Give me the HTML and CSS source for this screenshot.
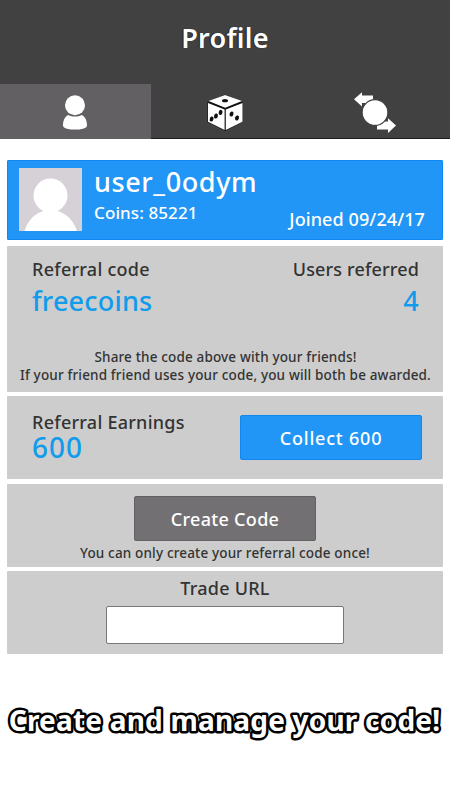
FILE: index.html
```html
<!DOCTYPE html>
<html lang="en">
<head>
    <meta charset="UTF-8">
    <title>Profile</title>
    <link rel="stylesheet" href="styles.css">
</head>
<body>
    <header class="header">
        <h1 class="title">Profile</h1>
    </header>

    <!-- Tabs -->
    <nav class="tabs">
        <a class="tab active">
            <svg width="50" height="54" viewBox="50 84 50 54">
                <path d="M68.3 115 C64.5 117 63 121 63 125.500 C63 128.500 69 129.600 75 129.600 S87 128.500 87 125.500 C87 121 85.500 117 81.700 115 C78 117 72 117 68.300 115Z" fill="#fff"/>
                <circle cx="75" cy="105.200" r="10" fill="#fff"/>
            </svg>
        </a>
        <a class="tab">
            <svg width="50" height="54" viewBox="200 84 50 54">
                <path d="M207.500 102 L225 94.500 L242.700 102 V122 L225.200 131 L207.500 122Z" fill="#111"/>
                <path d="M208.500 101 L225 95 L242 101 L225.200 107.800Z M208 103 L224.600 109.500 V130 L208 121.700Z M242.500 103 L225.800 109.500 V130 L242.500 121.700Z" fill="#fff"/>
                <ellipse cx="225" cy="100.700" rx="3" ry="1.600" fill="#111"/>
                <g fill="#111">
                    <ellipse cx="211.600" cy="119" rx="1.900" ry="2.600" transform="rotate(15 211.600 119)"/>
                    <ellipse cx="216" cy="116" rx="1.900" ry="2.600" transform="rotate(15 216 116)"/>
                    <ellipse cx="220.600" cy="112.400" rx="1.900" ry="2.600" transform="rotate(15 220.600 112.400)"/>
                    <ellipse cx="231.500" cy="114" rx="1.900" ry="2.600" transform="rotate(20 231.500 114)"/>
                    <ellipse cx="237" cy="118" rx="1.900" ry="2.600" transform="rotate(20 237 118)"/>
                </g>
            </svg>
        </a>
        <a class="tab">
            <svg width="50" height="54" viewBox="350 84 50 54">
                <path d="M354 99.300 L362 92.200 V95.500 H373 V103 H362 V106.500Z" fill="#fff"/>
                <path d="M396 125.500 L388 118.200 V121.500 H377 V129.500 H388 V133Z" fill="#fff"/>
                <circle cx="375" cy="112.500" r="12.900" fill="#fff" stroke="#414141" stroke-width="1.200"/>
            </svg>
        </a>
    </nav>

    <main class="content">
        <!-- User -->
        <section class="card user">
            <svg class="avatar" width="63" height="63" viewBox="0 0 63 63">
                <rect width="63" height="63" fill="#d5d1d6"/>
                <path d="M5.500 63 C10 48 21 42 31.500 42 S53 48 58 63Z" fill="#fff"/>
                <circle cx="31.500" cy="27.500" r="17" fill="#fff"/>
            </svg>
            <div class="user-info">
                <div class="name">user_0odym</div>
                <div class="coins">Coins: 85221</div>
            </div>
            <div class="joined">Joined 09/24/17</div>
        </section>

        <!-- Referral code -->
        <section class="card referral">
            <div class="row">
                <div>
                    <div class="label">Referral code</div>
                    <div class="value">freecoins</div>
                </div>
                <div class="right">
                    <div class="label label-users">Users referred</div>
                    <div class="value">4</div>
                </div>
            </div>
            <p class="note">Share the code above with your friends!</p>
            <p class="note">If your friend friend uses your code, you will both be awarded.</p>
        </section>

        <!-- Earnings -->
        <section class="card earnings">
            <div>
                <div class="label">Referral Earnings</div>
                <div class="value value-earnings">600</div>
            </div>
            <button class="button collect">Collect 600</button>
        </section>

        <section class="card create">
            <button class="button create-button">Create Code</button>
            <p class="note">You can only create your referral code once!</p>
        </section>

        <section class="card trade">
            <label class="label label-trade" for="trade-url">Trade URL</label>
            <input type="text" id="trade-url" class="trade-input">
        </section>
    </main>

    <svg class="caption" width="450" height="50" viewBox="0 0 450 50">
        <text x="224.500" y="35" text-anchor="middle">Create and manage your code!</text>
    </svg>
</body>
</html>
```

FILE: styles.css
```css
* {
    box-sizing: border-box;
}
body {
    margin: 0;
    background: #fff;
    color: #333;
    font-family: "Noto Sans", "Open Sans", sans-serif;
    font-weight: 500;
    white-space: nowrap;
    overflow: hidden;
}
p, h1 {
    margin: 0;
}
.header {
    height: 84px;
    padding-top: 18px;
    background: #414141;
    color: #fff;
    text-align: center;
}
.title {
    font-size: 27px;
    line-height: 40px;
    font-weight: 600;
    letter-spacing: 0.3px;
    text-shadow: -1px 0 1px #222;
}
.tabs {
    display: flex;
    height: 55px;
    background: #414141;
    border-bottom: 1px solid #1c1c1c;
}
.tab {
    flex: 1;
    height: 54px;
    text-align: center;
}
.tab svg {
    display: block;
    margin: 0 auto;
}
.tab.active {
    height: 55px;
    background: #636063;
    box-shadow: 1px 0 0 #636063;
}
.content {
    display: flex;
    flex-direction: column;
    padding: 21px 7px 0;
}
.card {
    background: #cdcdcd;
    border-radius: 1px;
}
.user {
    display: flex;
    height: 80px;
    margin-bottom: 6px;
    padding: 7px 17px 0 11px;
    background: #2196f6;
    border: 1px solid #0f88ef;
    color: #fff;
}
.avatar {
    flex: none;
}
.user-info {
    flex: 1;
    padding-left: 12px;
}
.name {
    margin-top: -5px;
    font-size: 27px;
    line-height: 38px;
    letter-spacing: 0.6px;
}
.coins {
    font-size: 17px;
    line-height: 24px;
    letter-spacing: 0.1px;
}
.joined {
    padding-top: 39px;
    font-size: 18px;
    line-height: 24px;
    letter-spacing: 0.1px;
}
.referral {
    height: 146px;
    margin-bottom: 4px;
    padding: 11px 24px 0 25px;
}
.row {
    display: flex;
    justify-content: space-between;
    height: 91px;
}
.right {
    text-align: right;
}
.label {
    font-size: 18px;
    line-height: 24px;
    letter-spacing: 0.25px;
}
.label-users {
    letter-spacing: 0.15px;
}
.value {
    color: #119ceb;
    font-size: 27px;
    line-height: 39px;
    letter-spacing: 0.2px;
}
.note {
    font-size: 13.5px;
    line-height: 18px;
    letter-spacing: 0.16px;
    text-align: center;
}
.referral .note {
    margin: 0 -20px;
}
.earnings {
    display: flex;
    justify-content: space-between;
    height: 83px;
    margin-bottom: 5px;
    padding: 14px 21px 0 25px;
}
.value-earnings {
    font-size: 28px;
    line-height: 27px;
    letter-spacing: 1px;
}
.button {
    width: 182px;
    height: 45px;
    margin-top: 5px;
    padding: 0;
    border: 1px solid #0f88ef;
    border-radius: 2px;
    background: #2196f6;
    color: #fff;
    font: inherit;
    font-size: 18px;
    letter-spacing: 0.3px;
}
.collect {
    letter-spacing: 0.8px;
}
.create {
    height: 83px;
    margin-bottom: 4px;
    padding-top: 12px;
    text-align: center;
}
.create-button {
    display: block;
    margin: 0 auto 3px;
    border-color: #636063;
    background: #737073;
}
.trade {
    height: 83px;
    padding-top: 5px;
    text-align: center;
}
.label-trade {
    display: block;
}
.trade-input {
    display: block;
    width: 238px;
    height: 38px;
    margin: 6px auto 0;
    border: 1px solid #777;
    border-radius: 2px;
    background: #fff;
}
.caption {
    display: block;
    margin-top: 42px;
}
.caption text {
    fill: #fff;
    stroke: #000;
    stroke-width: 5px;
    stroke-linejoin: round;
    paint-order: stroke fill;
    font-size: 28px;
    font-weight: 700;
    letter-spacing: 0.2px;
}
```
